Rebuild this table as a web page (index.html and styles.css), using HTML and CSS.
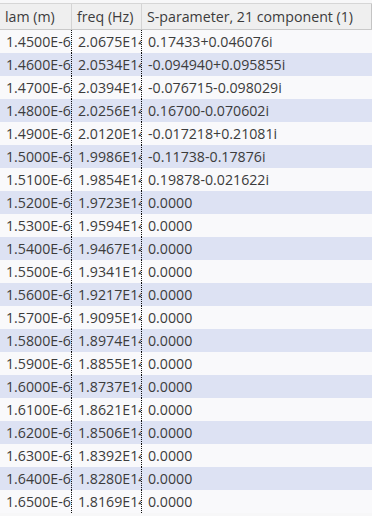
FILE: index.html
```html
<!DOCTYPE html>
<html>
<head>
<meta charset="utf-8">
<link rel="stylesheet" href="styles.css">
</head>
<body>
<div class="table">
  <div class="head">
    <div class="hc">lam (m)</div>
    <div class="hc">freq (Hz)</div>
    <div class="hc last">S-parameter, 21 component (1)</div>
  </div>
  <div class="row"><div class="c">1.4500E-6</div><div class="c">2.0675E14</div><div class="c last">0.17433+0.046076i</div></div>
  <div class="row alt"><div class="c">1.4600E-6</div><div class="c">2.0534E14</div><div class="c last">-0.094940+0.095855i</div></div>
  <div class="row"><div class="c">1.4700E-6</div><div class="c">2.0394E14</div><div class="c last">-0.076715-0.098029i</div></div>
  <div class="row alt"><div class="c">1.4800E-6</div><div class="c">2.0256E14</div><div class="c last">0.16700-0.070602i</div></div>
  <div class="row"><div class="c">1.4900E-6</div><div class="c">2.0120E14</div><div class="c last">-0.017218+0.21081i</div></div>
  <div class="row alt"><div class="c">1.5000E-6</div><div class="c">1.9986E14</div><div class="c last">-0.11738-0.17876i</div></div>
  <div class="row"><div class="c">1.5100E-6</div><div class="c">1.9854E14</div><div class="c last">0.19878-0.021622i</div></div>
  <div class="row alt"><div class="c">1.5200E-6</div><div class="c">1.9723E14</div><div class="c last">0.0000</div></div>
  <div class="row"><div class="c">1.5300E-6</div><div class="c">1.9594E14</div><div class="c last">0.0000</div></div>
  <div class="row alt"><div class="c">1.5400E-6</div><div class="c">1.9467E14</div><div class="c last">0.0000</div></div>
  <div class="row"><div class="c">1.5500E-6</div><div class="c">1.9341E14</div><div class="c last">0.0000</div></div>
  <div class="row alt"><div class="c">1.5600E-6</div><div class="c">1.9217E14</div><div class="c last">0.0000</div></div>
  <div class="row"><div class="c">1.5700E-6</div><div class="c">1.9095E14</div><div class="c last">0.0000</div></div>
  <div class="row alt"><div class="c">1.5800E-6</div><div class="c">1.8974E14</div><div class="c last">0.0000</div></div>
  <div class="row"><div class="c">1.5900E-6</div><div class="c">1.8855E14</div><div class="c last">0.0000</div></div>
  <div class="row alt"><div class="c">1.6000E-6</div><div class="c">1.8737E14</div><div class="c last">0.0000</div></div>
  <div class="row"><div class="c">1.6100E-6</div><div class="c">1.8621E14</div><div class="c last">0.0000</div></div>
  <div class="row alt"><div class="c">1.6200E-6</div><div class="c">1.8506E14</div><div class="c last">0.0000</div></div>
  <div class="row"><div class="c">1.6300E-6</div><div class="c">1.8392E14</div><div class="c last">0.0000</div></div>
  <div class="row alt"><div class="c">1.6400E-6</div><div class="c">1.8280E14</div><div class="c last">0.0000</div></div>
  <div class="row"><div class="c">1.6500E-6</div><div class="c">1.8169E14</div><div class="c last">0.0000</div></div>
</div>
</body>
</html>
```
FILE: styles.css
```css
html, body {
  margin: 0;
  padding: 0;
  background: #f7f7f8;
  overflow: hidden;
}
.table {
  padding-top: 3px;
  font-family: "Open Sans", "DejaVu Sans", sans-serif;
  font-size: 14.2px;
  color: #3c3c3c;
  width: 372px;
}
.head {
  display: grid;
  grid-template-columns: 72px 70px 1fr;
  height: 25px;
  border-top: 1px solid #d6d6d6;
  border-bottom: 1px solid #c9c9c9;
  background: #efefef;
}
.hc {
  border-right: 1px solid #d4d4d4;
  padding-left: 5px;
  line-height: 26px;
  white-space: nowrap;
  overflow: hidden;
}
.hc.last {
  border-right: 1px solid #c4c4c4;
}
.row {
  display: grid;
  grid-template-columns: 72px 70px 1fr;
  height: 23px;
  background: #f9f9fb;
}
.row.alt {
  background: #dde2f3;
}
.c {
  border-right: 1px dotted #111;
  padding-left: 6px;
  line-height: 23px;
  white-space: nowrap;
  overflow: hidden;
}
.c.last {
  border-right: none;
}
```
